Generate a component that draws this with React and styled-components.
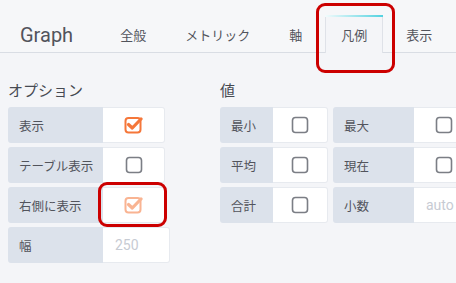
import React from 'react'
import styled, { createGlobalStyle } from 'styled-components'

const Global = createGlobalStyle`
  body {
    margin: 0;
    background: #f4f5f8;
    font-family: Roboto, "Noto Sans CJK JP", sans-serif;
    overflow: hidden;
  }
`

const Page = styled.div`
  position: relative;
  width: 456px;
  height: 283px;
  overflow: hidden;
`

const Header = styled.div`
  display: flex;
  align-items: flex-end;
  height: 52px;
  border-bottom: 1px solid #d9dde4;
  background: #f6f7f9;
  white-space: nowrap;
`

const Title = styled.div`
  flex-shrink: 0;
  font-size: 20px;
  color: #52545c;
  padding: 0 0 5px 20px;
  margin-right: 31px;
  line-height: 24px;
`

const Tabs = styled.div`
  display: flex;
  flex-shrink: 0;
  gap: 7px;
  align-items: flex-end;
`

const Tab = styled.div`
  position: relative;
  flex-shrink: 0;
  padding: 0 15px;
  height: ${p => (p.$active ? '38px' : '37px')};
  line-height: 39px;
  font-size: 13px;
  font-family: "Noto Sans CJK JP", sans-serif;
  color: #52545c;
  margin-bottom: ${p => (p.$active ? '-1px' : '0')};
  background: ${p => (p.$active ? '#f4f5f8' : 'transparent')};
  border-left: 1px solid ${p => (p.$active ? '#dfe2e8' : 'transparent')};
  border-right: 1px solid ${p => (p.$active ? '#dfe2e8' : 'transparent')};
  box-sizing: border-box;
  &::before {
    content: '';
    display: ${p => (p.$active ? 'block' : 'none')};
    position: absolute;
    left: -1px;
    right: -1px;
    top: 0;
    height: 2px;
    background: linear-gradient(90deg, #f2fbfc, #52d2e0);
  }
`

const Body = styled.div`
  display: flex;
  gap: 50px;
  padding: 27px 0 0 8px;
`

const Section = styled.div`
  display: flex;
  flex-direction: column;
`

const SectionTitle = styled.div`
  font-family: "Noto Sans CJK JP", sans-serif;
  font-size: 15px;
  line-height: 20px;
  color: #464a52;
  margin-bottom: 7px;
`

const Rows = styled.div`
  display: flex;
  flex-direction: column;
  gap: 4px;
`

const Row = styled.div`
  display: flex;
  gap: 5px;
`

const Field = styled.div`
  display: flex;
  flex-shrink: 0;
  height: 36px;
`

const Label = styled.div`
  width: ${p => p.$w}px;
  flex-shrink: 0;
  box-sizing: border-box;
  padding-left: 11px;
  display: flex;
  align-items: center;
  background: #dce2eb;
  border-radius: 3px 0 0 3px;
  font-family: "Noto Sans CJK JP", sans-serif;
  font-size: 12.5px;
  color: #52545c;
`

const Cell = styled.div`
  width: ${p => p.$w}px;
  flex-shrink: 0;
  box-sizing: border-box;
  display: flex;
  align-items: center;
  justify-content: ${p => (p.$input ? 'flex-start' : 'center')};
  padding-left: ${p => (p.$input ? '12px' : '0')};
  background: #fff;
  border: 1px solid #e7eaef;
  border-left: none;
  border-radius: 0 3px 3px 0;
  font-size: 14px;
  color: #c7cbd3;
`

const Annotation = styled.div`
  position: absolute;
  left: ${p => p.$x}px;
  top: ${p => p.$y}px;
  width: ${p => p.$w}px;
  height: ${p => p.$h}px;
  border: 3px solid #cc0000;
  border-radius: 9px;
  box-sizing: border-box;
  pointer-events: none;
`

function Check({ on, faded }) {
  if (!on) {
    return (
      <svg width="18" height="18" viewBox="0 0 18 18">
        <rect x="1.5" y="1.5" width="15" height="15" rx="3" fill="none" stroke="#7b7e85" strokeWidth="1.6" />
      </svg>
    )
  }
  return (
    <svg width="19" height="18" viewBox="0 0 19 18" style={{ opacity: faded ? 0.55 : 1 }}>
      <rect x="1.5" y="2" width="15" height="14.5" rx="3" fill="none" stroke="#f5773a" strokeWidth="2" />
      <path d="M4.5 8.5 L8.3 12 L17 3" fill="none" stroke="#f5773a" strokeWidth="3.2" strokeLinecap="round" strokeLinejoin="round" />
    </svg>
  )
}

function CheckField({ label, lw, cw, on, faded }) {
  return (
    <Field>
      <Label $w={lw}>{label}</Label>
      <Cell $w={cw}><Check on={on} faded={faded} /></Cell>
    </Field>
  )
}

function InputField({ label, lw, cw, value }) {
  return (
    <Field>
      <Label $w={lw}>{label}</Label>
      <Cell $w={cw} $input>{value}</Cell>
    </Field>
  )
}

export default function App() {
  return (
    <Page>
      <Global />
      <Header>
        <Title>Graph</Title>
        <Tabs>
          <Tab>全般</Tab>
          <Tab>メトリック</Tab>
          <Tab>軸</Tab>
          <Tab $active>凡例</Tab>
          <Tab>表示</Tab>
        </Tabs>
      </Header>
      <Body>
        <Section>
          <SectionTitle>オプション</SectionTitle>
          <Rows>
            <CheckField label="表示" lw={95} cw={62} on />
            <CheckField label="テーブル表示" lw={95} cw={62} />
            <CheckField label="右側に表示" lw={95} cw={62} on faded />
            <InputField label="幅" lw={95} cw={67} value="250" />
          </Rows>
        </Section>
        <Section>
          <SectionTitle>値</SectionTitle>
          <Rows>
            <Row>
              <CheckField label="最小" lw={53} cw={55} />
              <CheckField label="最大" lw={81} cw={60} />
            </Row>
            <Row>
              <CheckField label="平均" lw={53} cw={55} />
              <CheckField label="現在" lw={81} cw={60} />
            </Row>
            <Row>
              <CheckField label="合計" lw={53} cw={55} />
              <InputField label="小数" lw={81} cw={60} value="auto" />
            </Row>
          </Rows>
        </Section>
      </Body>
      <Annotation $x={316} $y={3} $w={79} $h={70} />
      <Annotation $x={98} $y={182} $w={69} $h={45} />
    </Page>
  )
}
